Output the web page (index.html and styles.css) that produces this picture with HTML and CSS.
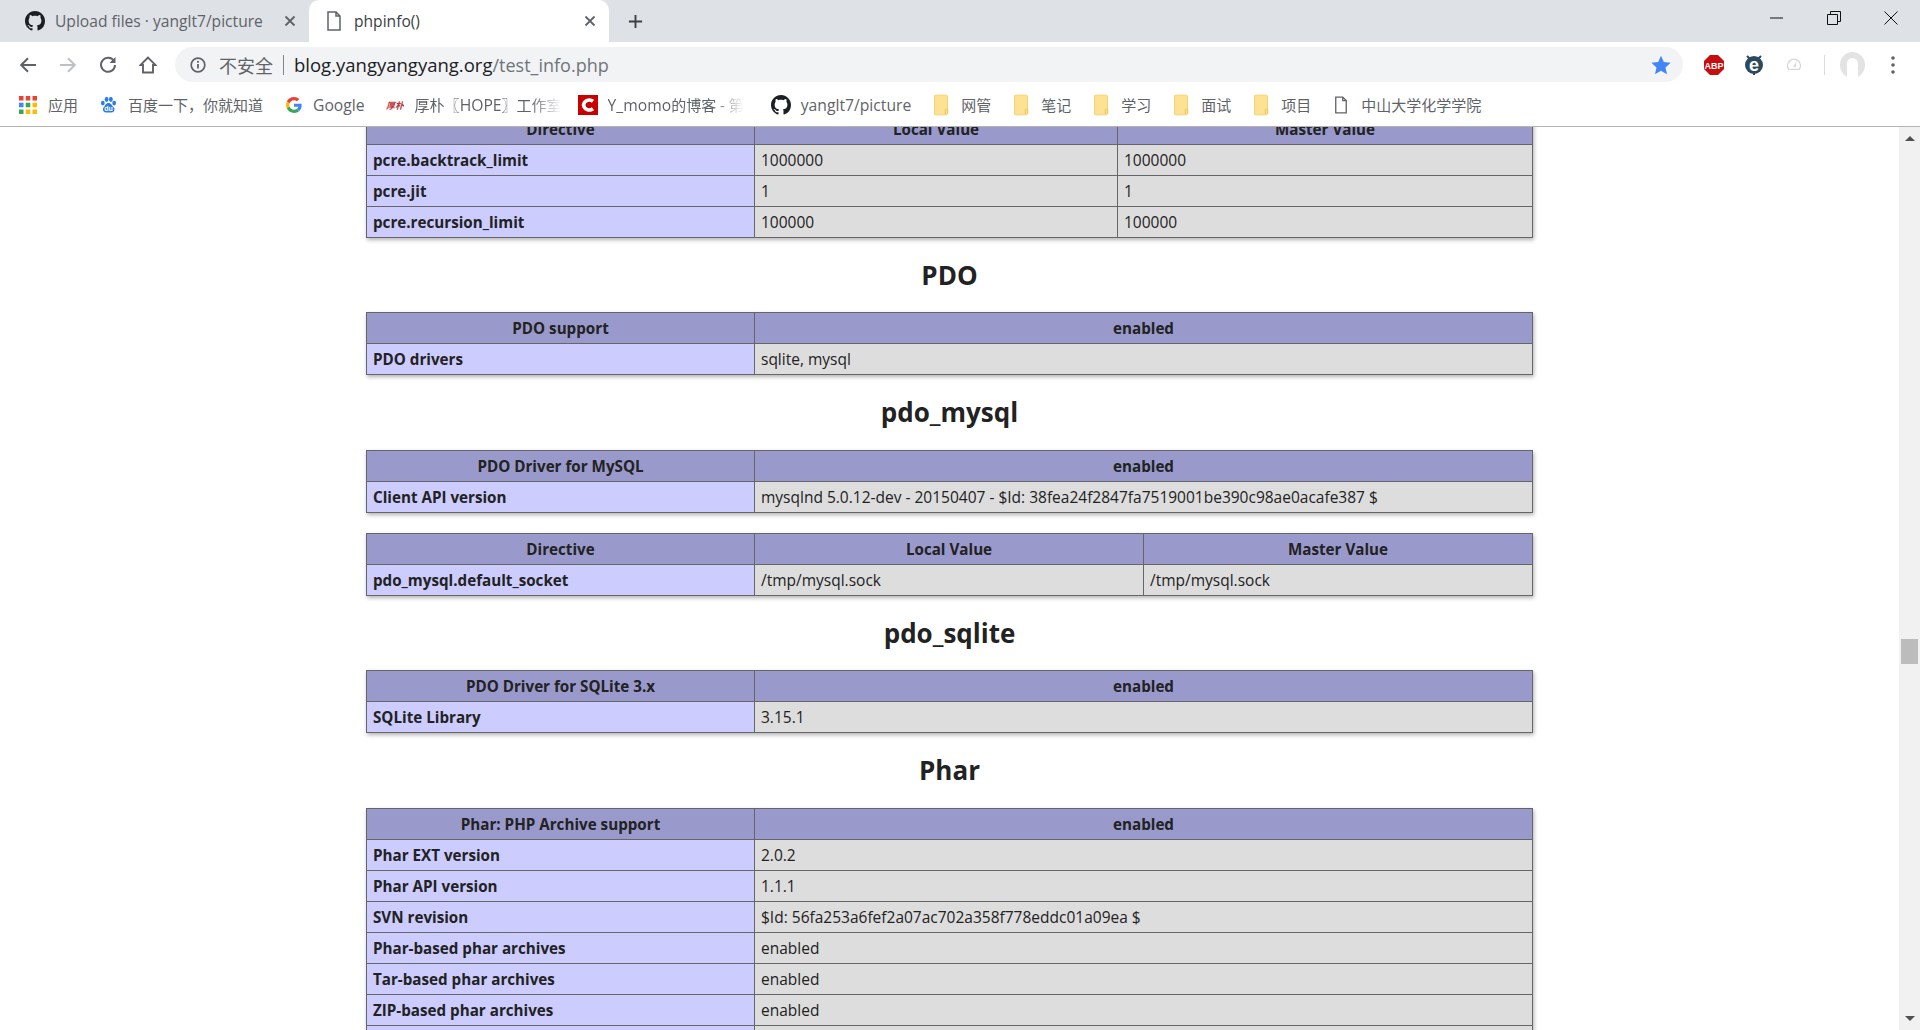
FILE: index.html
```html
<!DOCTYPE html>
<html lang="zh-CN">
<head>
    <meta charset="UTF-8">
    <title>phpinfo()</title>
    <link rel="stylesheet" href="styles.css">
</head>
<body>
    <svg class="defs" width="0" height="0">
        <symbol id="gh" viewBox="0 0 16 16"><path d="M8 0C3.58 0 0 3.58 0 8c0 3.54 2.29 6.53 5.47 7.59.4.07.55-.17.55-.38 0-.19-.01-.82-.01-1.49-2.01.37-2.53-.49-2.69-.94-.09-.23-.48-.94-.82-1.13-.28-.15-.68-.52-.01-.53.63-.01 1.08.58 1.23.82.72 1.21 1.87.87 2.33.66.07-.52.28-.87.51-1.07-1.78-.2-3.64-.89-3.64-3.95 0-.87.31-1.59.82-2.15-.08-.2-.36-1.02.08-2.12 0 0 .67-.21 2.2.82.64-.18 1.32-.27 2-.27.68 0 1.36.09 2 .27 1.53-1.04 2.2-.82 2.2-.82.44 1.1.16 1.92.08 2.12.51.56.82 1.27.82 2.15 0 3.07-1.87 3.75-3.65 3.95.29.25.54.73.54 1.48 0 1.07-.01 1.93-.01 2.2 0 .21.15.46.55.38A8.013 8.013 0 0016 8c0-4.42-3.58-8-8-8z" fill="#1b1f23"/></symbol>
        <symbol id="doc" viewBox="0 0 16 20"><path d="M2 1h8l4 4v14H2z M10 1v4h4" fill="#fff" stroke="#5f6368" stroke-width="1.5"/></symbol>
        <symbol id="folder" viewBox="0 0 16 22"><path d="M1.5 .5h11a2 2 0 0 1 2 2v17a2 2 0 0 1-2 2h-11a1 1 0 0 1-1-1v-19a1 1 0 0 1 1-1z" fill="#fde293" stroke="#f3cf68"/><path d="M12 21v-4a1.3 1.3 0 0 1 2.6 0v3" fill="none" stroke="#f0c552" stroke-width="1"/></symbol>
        <symbol id="close" viewBox="0 0 12 12"><path d="M1.5 1.5l9 9M10.5 1.5l-9 9" stroke="#5f6368" stroke-width="1.8" fill="none"/></symbol>
    </svg>

    <div class="tabstrip">
        <div class="tab">
            <svg class="tab-icon"><use href="#gh"/></svg>
            <span class="tab-title">Upload files · yanglt7/picture</span>
            <svg class="tab-close"><use href="#close"/></svg>
        </div>
        <div class="tab tab-active">
            <svg class="tab-icon tab-doc"><use href="#doc"/></svg>
            <span class="tab-title">phpinfo()</span>
            <svg class="tab-close"><use href="#close"/></svg>
        </div>
        <svg class="new-tab" viewBox="0 0 16 16"><path d="M8 1v14M1 8h14" stroke="#3c4043" stroke-width="2"/></svg>
        <div class="win-controls">
            <svg viewBox="0 0 14 14"><path d="M0 7h13" stroke="#111" stroke-width="1"/></svg>
            <svg viewBox="0 0 14 14"><path d="M.5 3.5h10v10H.5z M3.5 3.5V.5h10v10h-3" fill="none" stroke="#111" stroke-width="1"/></svg>
            <svg viewBox="0 0 14 14"><path d="M.5 .5l13 13M13.5 .5l-13 13" stroke="#111" stroke-width="1"/></svg>
        </div>
    </div>

    <div class="toolbar">
        <svg class="nav-btn" viewBox="0 0 18 18"><path d="M17 9H2.5M9 2.2L2.2 9 9 15.8" fill="none" stroke="#5f6368" stroke-width="2"/></svg>
        <svg class="nav-btn" viewBox="0 0 18 18"><path d="M1 9h14.5M9 2.2L15.8 9 9 15.8" fill="none" stroke="#bdc1c6" stroke-width="2"/></svg>
        <svg class="nav-btn" viewBox="0 0 18 18"><path d="M15 5.2A7 7 0 1 0 16 9" fill="none" stroke="#5f6368" stroke-width="2"/><path d="M16.5 1v6h-6z" fill="#5f6368"/></svg>
        <svg class="nav-btn" viewBox="0 0 18 18"><path d="M9 1.5L1.5 9H4v7.5h10V9h2.5z" fill="none" stroke="#5f6368" stroke-width="1.9"/></svg>
        <div class="omnibox">
            <svg class="info-icon" viewBox="0 0 16 16"><circle cx="8" cy="8" r="6.8" fill="none" stroke="#5f6368" stroke-width="1.7"/><path d="M8 7v4.5" stroke="#5f6368" stroke-width="1.8"/><circle cx="8" cy="4.8" r="1.1" fill="#5f6368"/></svg>
            <span class="insecure">不安全</span>
            <span class="divider"></span>
            <span class="url">blog.yangyangyang.org<span class="url-path">/test_info.php</span></span>
            <svg class="star" viewBox="0 0 20 20"><path d="M10 .8l2.8 6.3 6.8.7-5.1 4.6 1.500 6.800L10 15.700l-6 3.500 1.500-6.800L.4 7.800l6.800-.7z" fill="#4285f4"/></svg>
        </div>
        <div class="extensions">
            <svg class="ext" viewBox="0 0 20 20"><path d="M6 0h8l6 6v8l-6 6H6l-6-6V6z" fill="#c70d0d"/><text x="10" y="13.500" class="abp-text">ABP</text></svg>
            <svg class="ext" viewBox="0 0 20 20"><path d="M3 1l3 3M17 1l-3 3M10 16v4" stroke="#2b4a5e" stroke-width="2"/><circle cx="10" cy="10" r="9" fill="#2b4a5e"/><text x="10" y="15.500" class="e-text">e</text></svg>
            <svg class="ext ext-gauge" viewBox="0 0 20 20"><path d="M3.500 15.500a8 8 0 1 1 13 0z" fill="none" stroke="#d5d7da" stroke-width="1.800"/><path d="M9 12l4-6-1 7z" fill="#d5d7da"/></svg>
            <span class="ext-sep"></span>
            <div class="avatar"><span class="avatar-hair"></span></div>
            <svg class="menu-dots" viewBox="0 0 4 18"><circle cx="2" cy="2" r="1.800"/><circle cx="2" cy="9" r="1.800"/><circle cx="2" cy="16" r="1.800"/></svg>
        </div>
    </div>

    <div class="bookmarks">
        <div class="bm bm-apps">
            <svg class="bm-icon" viewBox="0 0 16 16">
                <rect x="0" y="0" width="4" height="4" fill="#ea4335"/><rect x="6" y="0" width="4" height="4" fill="#ea4335"/><rect x="12" y="0" width="4" height="4" fill="#ea4335"/>
                <rect x="0" y="6" width="4" height="4" fill="#4285f4"/><rect x="6" y="6" width="4" height="4" fill="#34a853"/><rect x="12" y="6" width="4" height="4" fill="#fbbc05"/>
                <rect x="0" y="12" width="4" height="4" fill="#34a853"/><rect x="6" y="12" width="4" height="4" fill="#fbbc05"/><rect x="12" y="12" width="4" height="4" fill="#fbbc05"/>
            </svg>
            <span>应用</span>
        </div>
        <div class="bm bm-baidu">
            <svg class="bm-icon" viewBox="0 0 18 18">
                <g fill="#2b7de9"><ellipse cx="3" cy="7" rx="2" ry="2.600"/><ellipse cx="7" cy="3" rx="2" ry="2.800"/><ellipse cx="11.500" cy="3" rx="2" ry="2.800"/><ellipse cx="15" cy="7" rx="2" ry="2.600"/><path d="M9 7c3 0 3.500 3 5.500 4.500 2 2 .5 6-3 5.500-1-.2-3-.2-4.500 0-3.500.5-5-3.500-3-5.500C5.500 10 6 7 9 7z"/></g>
                <text x="9" y="15.500" class="du-text">du</text>
            </svg>
            <span>百度一下，你就知道</span>
        </div>
        <div class="bm bm-google">
            <svg class="bm-icon" viewBox="0 0 48 48">
                <path fill="#EA4335" d="M24 9.500c3.540 0 6.710 1.220 9.210 3.600l6.850-6.850C35.900 2.380 30.470 0 24 0 14.620 0 6.510 5.380 2.560 13.220l7.980 6.190C12.430 13.720 17.740 9.500 24 9.500z"/>
                <path fill="#4285F4" d="M46.980 24.550c0-1.570-.15-3.090-.38-4.550H24v9.020h12.940c-.58 2.960-2.260 5.480-4.780 7.180l7.730 6c4.510-4.180 7.090-10.360 7.090-17.65z"/>
                <path fill="#FBBC05" d="M10.530 28.590c-.48-1.450-.76-2.990-.76-4.590s.27-3.140.76-4.590l-7.980-6.190C.92 16.460 0 20.120 0 24c0 3.880.92 7.540 2.560 10.780l7.970-6.190z"/>
                <path fill="#34A853" d="M24 48c6.480 0 11.930-2.130 15.890-5.810l-7.730-6c-2.150 1.450-4.920 2.300-8.160 2.300-6.260 0-11.570-4.220-13.470-9.910l-7.980 6.190C6.510 42.620 14.620 48 24 48z"/>
            </svg>
            <span class="latin">Google</span>
        </div>
        <div class="bm bm-fade bm-hope">
            <svg class="bm-icon" viewBox="0 0 18 20"><text x="9" y="14" class="hope-text">厚朴</text></svg>
            <span>厚朴〖<span class="latin">HOPE</span>〗工作室</span>
        </div>
        <div class="bm bm-fade bm-momo">
            <svg class="bm-icon" viewBox="0 0 20 20"><rect width="20" height="20" fill="#c80000"/><path d="M15 6.200A6 6 0 0 0 5.500 10 6 6 0 0 0 15 13.800" fill="none" stroke="#fff" stroke-width="3.600"/></svg>
            <span><span class="latin">Y_momo</span>的博客 - 第</span>
        </div>
        <div class="bm bm-github">
            <svg class="bm-icon"><use href="#gh"/></svg>
            <span class="latin">yanglt7/picture</span>
        </div>
        <div class="bm bm-folder"><svg class="bm-icon"><use href="#folder"/></svg><span>网管</span></div>
        <div class="bm bm-folder"><svg class="bm-icon"><use href="#folder"/></svg><span>笔记</span></div>
        <div class="bm bm-folder"><svg class="bm-icon"><use href="#folder"/></svg><span>学习</span></div>
        <div class="bm bm-folder"><svg class="bm-icon"><use href="#folder"/></svg><span>面试</span></div>
        <div class="bm bm-folder"><svg class="bm-icon"><use href="#folder"/></svg><span>项目</span></div>
        <div class="bm bm-page"><svg class="bm-icon"><use href="#doc"/></svg><span>中山大学化学学院</span></div>
    </div>

    <div class="viewport">
        <div class="page">
            <table class="info cols-3">
                <tr class="h"><th>Directive</th><th>Local Value</th><th>Master Value</th></tr>
                <tr><td class="e">pcre.backtrack_limit</td><td class="v">1000000</td><td class="v">1000000</td></tr>
                <tr><td class="e">pcre.jit</td><td class="v">1</td><td class="v">1</td></tr>
                <tr><td class="e">pcre.recursion_limit</td><td class="v">100000</td><td class="v">100000</td></tr>
            </table>

            <h2>PDO</h2>
            <table class="info">
                <tr class="h"><th>PDO support</th><th>enabled</th></tr>
                <tr><td class="e">PDO drivers</td><td class="v">sqlite, mysql</td></tr>
            </table>

            <h2>pdo_mysql</h2>
            <table class="info">
                <tr class="h"><th>PDO Driver for MySQL</th><th>enabled</th></tr>
                <tr><td class="e">Client API version</td><td class="v">mysqlnd 5.0.12-dev - 20150407 - $Id: 38fea24f2847fa7519001be390c98ae0acafe387 $</td></tr>
            </table>
            <table class="info cols-even">
                <tr class="h"><th>Directive</th><th>Local Value</th><th>Master Value</th></tr>
                <tr><td class="e">pdo_mysql.default_socket</td><td class="v">/tmp/mysql.sock</td><td class="v">/tmp/mysql.sock</td></tr>
            </table>

            <h2>pdo_sqlite</h2>
            <table class="info">
                <tr class="h"><th>PDO Driver for SQLite 3.x</th><th>enabled</th></tr>
                <tr><td class="e">SQLite Library</td><td class="v">3.15.1</td></tr>
            </table>

            <h2>Phar</h2>
            <table class="info">
                <tr class="h"><th>Phar: PHP Archive support</th><th>enabled</th></tr>
                <tr><td class="e">Phar EXT version</td><td class="v">2.0.2</td></tr>
                <tr><td class="e">Phar API version</td><td class="v">1.1.1</td></tr>
                <tr><td class="e">SVN revision</td><td class="v">$Id: 56fa253a6fef2a07ac702a358f778eddc01a09ea $</td></tr>
                <tr><td class="e">Phar-based phar archives</td><td class="v">enabled</td></tr>
                <tr><td class="e">Tar-based phar archives</td><td class="v">enabled</td></tr>
                <tr><td class="e">ZIP-based phar archives</td><td class="v">enabled</td></tr>
                <tr><td class="e"></td><td class="v"></td></tr>
            </table>
        </div>
        <div class="scrollbar">
            <span class="arrow-up"></span>
            <div class="track"><span class="thumb"></span></div>
            <span class="arrow-down"></span>
        </div>
    </div>
</body>
</html>
```

FILE: styles.css
```css
html, body {
    margin: 0;
    height: 100%;
    overflow: hidden;
    background: #fff;
}
body {
    font-family: "Open Sans", "Noto Sans CJK SC", sans-serif;
    color: #222;
    display: flex;
    flex-direction: column;
    height: 1030px;
}
.defs {
    position: absolute;
}

/* tabs */
.tabstrip {
    height: 42px;
    flex: none;
    background: #dee1e6;
    display: flex;
    align-items: flex-start;
    padding-left: 8px;
}
.tab {
    width: 301px;
    height: 42px;
    box-sizing: border-box;
    display: flex;
    align-items: center;
    padding: 0 13px 0 17px;
    font-size: 15.600px;
    color: #5f6368;
}
.tab-active {
    background: #fff;
    border-radius: 10px 10px 0 0;
    color: #3c4043;
    padding-left: 17px;
    width: 300px;
}
.tab-icon {
    width: 20px;
    height: 20px;
    flex: none;
}
.tab-doc {
    width: 16px;
}
.tab-title {
    flex: 1;
    margin-left: 10px;
    white-space: nowrap;
}
.tab-active .tab-title {
    margin-left: 12px;
}
.tab-close {
    width: 12px;
    height: 12px;
    flex: none;
}
.new-tab {
    width: 15px;
    height: 15px;
    margin: 14px 0 0 19px;
}
.win-controls {
    margin-left: auto;
    display: flex;
    gap: 43px;
    padding: 11px 22px 0 0;
}
.win-controls svg {
    width: 14px;
    height: 14px;
}

/* toolbar */
.toolbar {
    height: 42px;
    flex: none;
    display: flex;
    align-items: center;
    padding: 0 0 1px 19px;
    margin-top: 2px;
    box-sizing: border-box;
}
.nav-btn {
    width: 18px;
    height: 18px;
    flex: none;
    margin-right: 22px;
}
.omnibox {
    width: 1508px;
    height: 35px;
    margin-left: -4px;
    background: #f1f3f4;
    border-radius: 18px;
    display: flex;
    align-items: center;
    padding: 0 12px 0 15px;
    box-sizing: border-box;
}
.info-icon {
    width: 16px;
    height: 16px;
    flex: none;
}
.insecure {
    margin-left: 13px;
    font-size: 18px;
    color: #5f6368;
}
.divider {
    width: 1px;
    height: 20px;
    background: #80868b;
    margin: 0 10px;
}
.url {
    font-size: 18.500px;
    color: #202124;
    white-space: nowrap;
}
.url-path {
    color: #70757a;
    font-size: 18px;
}
.star {
    width: 20px;
    height: 20px;
    margin-left: auto;
}
.extensions {
    display: flex;
    align-items: center;
    margin-left: 21px;
}
.ext {
    width: 20px;
    height: 20px;
    flex: none;
    margin-right: 20px;
}
.abp-text {
    font-family: "Liberation Sans", sans-serif;
    font-size: 9px;
    font-weight: bold;
    fill: #fff;
    text-anchor: middle;
}
.e-text {
    font-family: "Liberation Sans", sans-serif;
    font-size: 18px;
    font-weight: bold;
    fill: #fff;
    text-anchor: middle;
}
.ext-gauge {
    width: 16px;
    height: 16px;
    margin: 0 22px 0 2px;
}
.ext-sep {
    width: 1px;
    height: 20px;
    background: #dadce0;
    margin-right: 15px;
}
.avatar {
    width: 25px;
    height: 26px;
    border-radius: 50%;
    background: #e3e3e3;
    display: flex;
    justify-content: center;
    align-items: flex-end;
    margin-right: 26px;
}
.avatar-hair {
    width: 11px;
    height: 20px;
    border-radius: 6px 6px 2px 2px;
    background: #fff;
}
.menu-dots {
    width: 4px;
    height: 18px;
    fill: #5f6368;
}

/* bookmarks */
.bookmarks {
    height: 41px;
    flex: none;
    box-sizing: border-box;
    border-bottom: 1px solid #b4b4b4;
    display: flex;
    align-items: center;
    padding: 0 0 2px 19px;
    font-size: 15px;
    color: #5f6368;
    white-space: nowrap;
}
.latin {
    font-size: 15.700px;
}
.bm {
    display: flex;
    align-items: center;
    gap: 11px;
    margin-right: 22px;
    flex: none;
}
.bm > span {
    line-height: 20px;
}
.bm-icon {
    width: 20px;
    height: 20px;
    flex: none;
}
.bm-apps .bm-icon {
    width: 18px;
    height: 18px;
}
.bm-baidu .bm-icon {
    width: 17px;
    height: 18px;
}
.bm-baidu {
    margin-right: 23px;
}
.bm-google .bm-icon {
    width: 16px;
    height: 16px;
}
.bm-google {
    margin-right: 21px;
}
.du-text {
    font-family: "Liberation Sans", sans-serif;
    font-size: 7.500px;
    font-weight: bold;
    fill: #fff;
    text-anchor: middle;
}
.hope-text {
    font-family: "Noto Sans CJK SC", sans-serif;
    font-size: 9px;
    font-weight: bold;
    font-style: italic;
    fill: #b8383a;
    text-anchor: middle;
}
.bm-hope .bm-icon {
    width: 18px;
}
.bm-hope {
    margin-right: 16px;
}
.bm-fade > span {
    display: block;
    -webkit-mask-image: linear-gradient(90deg, #000 78%, transparent 100%);
    mask-image: linear-gradient(90deg, #000 78%, transparent 100%);
}
.bm-momo {
    gap: 10px;
    margin-right: 27px;
}
.bm-github {
    gap: 10px;
    margin-right: 23px;
}
.bm-folder .bm-icon {
    width: 15px;
    height: 22px;
}
.bm-folder {
    gap: 12px;
    margin-right: 23px;
}
.bm-page {
    gap: 13px;
}
.bm-page .bm-icon {
    width: 14px;
    height: 18px;
}

/* page */
.viewport {
    flex: 1;
    min-height: 0;
    display: flex;
    overflow: hidden;
}
.page {
    flex: 1;
    margin-top: -14.250px;
}
h2 {
    width: 1167px;
    margin: 0 auto;
    text-align: center;
    font-size: 26px;
    line-height: 74.500px;
    font-weight: bold;
    color: #222;
}
.info {
    width: 1167px;
    margin: 0 auto;
    border-collapse: collapse;
    table-layout: fixed;
    box-shadow: 1px 2px 4px rgba(0,0,0,0.3);
}
.info + .info {
    margin-top: 20px;
}
.info td, .info th {
    height: 30px;
    padding: 0 6px;
    border: 1px solid #666;
    line-height: 20px;
    white-space: nowrap;
    text-align: left;
}
.info td:first-child, .info th:first-child {
    width: 375px;
}
.cols-3 th:nth-child(2) {
    width: 350px;
}
.cols-even th:nth-child(2) {
    width: 376px;
}
.info th {
    background: #99c;
    text-align: center;
    font-weight: bold;
    font-size: 15.200px;
}
.e {
    background: #ccf;
    font-weight: bold;
    font-size: 15.200px;
}
.v {
    background: #ddd;
    font-weight: normal;
    font-size: 15.500px;
}

/* scrollbar */
.scrollbar {
    width: 21px;
    flex: none;
    background: #f1f1f1;
    display: flex;
    flex-direction: column;
    align-items: center;
}
.track {
    flex: 1;
    width: 100%;
    display: flex;
    flex-direction: column;
    padding-top: 489px;
    box-sizing: border-box;
    align-items: center;
}
.thumb {
    width: 17px;
    height: 25px;
    background: #bcbcbc;
}
.arrow-up, .arrow-down {
    width: 0;
    height: 0;
    border-left: 5px solid transparent;
    border-right: 5px solid transparent;
    margin: 9px 0;
}
.arrow-up {
    border-bottom: 5px solid #505050;
}
.arrow-down {
    border-top: 5px solid #505050;
}
```
